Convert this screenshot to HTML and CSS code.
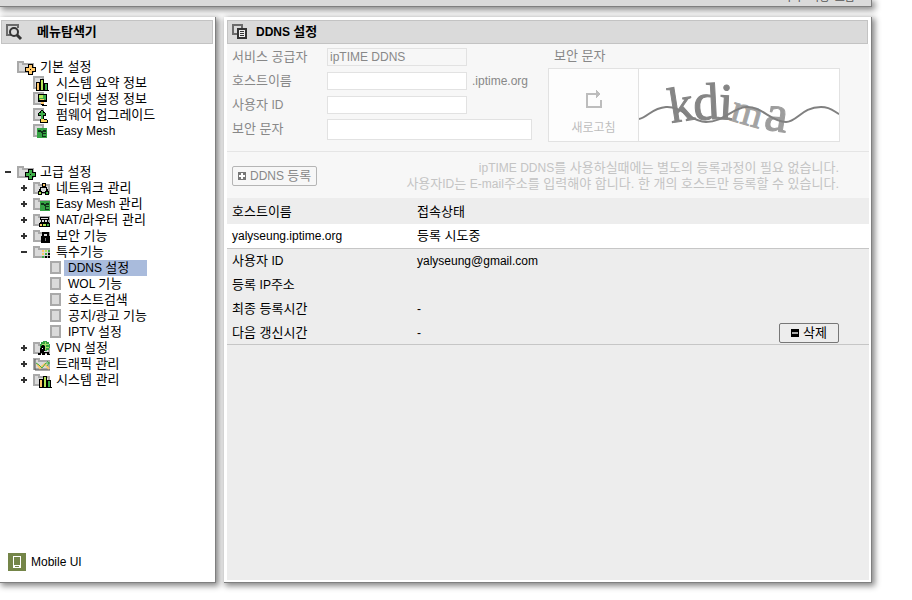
FILE: index.html
```html
<!DOCTYPE html>
<html lang="ko">
<head>
<meta charset="utf-8">
<title>DDNS 설정</title>
<link rel="stylesheet" href="styles.css">
</head>
<body>
<svg class="defs" width="0" height="0" aria-hidden="true">
  <symbol id="folder" viewBox="0 0 20 16"><path d="M1 3h5v2h10v8H1z" fill="#dadada" stroke="#a9a9a9" stroke-width="2"/></symbol>
  <symbol id="file" viewBox="0 0 20 16"><path d="M1 2h9v11H1z" fill="#dadada" stroke="#a9a9a9" stroke-width="2"/></symbol>
  <symbol id="cross" viewBox="0 0 20 16"><path d="M11 5h5v3h3v5h-3v3h-5v-3H8V8h3z" fill="#000"/><path d="M12 6h3v3h3v3h-3v3h-3v-3H9V9h3z" fill="currentColor"/><path d="M13 10h1v1h-1z" fill="#000"/></symbol>
  <symbol id="bars" viewBox="0 0 20 16"><path d="M3 7h4V4h4v4h4v7h1v1H3z" fill="#000"/><path d="M4 8h2v7H4z" fill="#ffc86b"/><path d="M8 5h2v10H8z" fill="#b5e655"/><path d="M12 9h2v6h-2z" fill="#3fae49"/></symbol>
  <symbol id="monitor" viewBox="0 0 20 16"><path d="M5 3h9v8H5z" fill="#000"/><path d="M6 4h7v5H6z" fill="#3fae49"/><path d="M6 4h4v3H6z" fill="#b5e655"/><path d="M7 8h4v1H7zM8 11h3v2H8z" fill="#ffc86b"/><path d="M8 13h3v1h3v1H9z" fill="#000"/></symbol>
  <symbol id="upgrade" viewBox="0 0 20 16"><path d="M8 3h2v1h1v1h1v1h1v3h-2v3h3v1h1v3H7v-4h1V9H5V6h1V5h1V4h1z" fill="#000"/><path d="M8 4h2v2h2v2h-2v4H8V8H6V6h2z" fill="#3fae49"/><path d="M8 12h3v1h3v2H8z" fill="#ffd65c"/></symbol>
  <symbol id="mesh" viewBox="0 0 20 16"><path d="M4 5h10v10H4z" fill="#35a344"/><path d="M5 7h3v1h2V7h3v2h-3v1h3v1h-3v2h3v1H9v-4H8v-1H5z" fill="#10341a"/></symbol>
  <symbol id="net" viewBox="0 0 20 16"><path d="M9 3h4v4h1v2h1v2h1v4h-4v-2H9v2H5v-4h1V9h1V7h2zM8 8v3h1v1h3v-1h1V8z" fill="#000" fill-rule="evenodd"/><path d="M10 4h2v2h-2z" fill="#ffc86b"/><path d="M6 12h2v2H6z" fill="#b5e655"/><path d="M13 12h2v2h-2z" fill="#3fae49"/></symbol>
  <symbol id="nat" viewBox="0 0 20 16"><path d="M7 5h9v3H7zM8 8h1v2H8zM11 8h1v2h-1zM14 8h1v2h-1zM7 10h9v1H7zM6 11h11v4H6z" fill="#000"/><path d="M8 6h7v1H8z" fill="#dadada"/><path d="M7 12h2v2H7z" fill="#ffc86b"/><path d="M10 12h3v2h-3z" fill="#b5e655"/><path d="M14 12h2v2h-2z" fill="#3fae49"/></symbol>
  <symbol id="lock" viewBox="0 0 20 16"><path d="M10 9V5h5v4" fill="none" stroke="#000" stroke-width="2"/><path d="M8 8h9v7H8z" fill="#000"/><path d="M12 10h1v3h-1z" fill="#777"/></symbol>
  <symbol id="dots" viewBox="0 0 20 16"><path d="M9 6h2v2H9zM9 9h2v2H9z" fill="#ffc86b"/><path d="M12 6h2v2h-2z" fill="#b5e655"/><path d="M15 6h2v2h-2zM9 12h2v2H9zM12 9h2v2h-2z" fill="#3fae49"/><path d="M15 9h2v2h-2zM12 12h2v2h-2zM15 12h2v2h-2z" fill="#000"/></symbol>
  <symbol id="vpn" viewBox="0 0 20 16"><circle cx="12" cy="6" r="5" fill="#35a344"/><path d="M9 4h7M9 7h7M12 2v8" stroke="#a5e06b"/><path d="M8 6h1V5h2v1h1v5h-1v1h5v2h1v1h-3v-2h-2v2H9v-2H8v2H5v-2h2v-2H7V8h1z" fill="#000"/><path d="M9 8h1v1H9z" fill="#fff"/></symbol>
  <symbol id="chart" viewBox="0 0 20 16"><path d="M2 3v11h15" fill="none" stroke="#555"/><path d="M4 8l3 4 5-4 4 5" fill="none" stroke="#ffc86b" stroke-width="2"/><path d="M3 7l3 2 3 3 4-5h4M14 5l2 2-2 3" fill="none" stroke="#3fae49" stroke-width="1"/></symbol>
</svg>

<header class="topbar"><span>누구</span><span>사용</span><span>도움</span></header>

<div class="layout">
  <nav class="panel sidebar" aria-label="메뉴탐색기">
    <h2 class="title">
      <svg width="18" height="18" viewBox="0 0 18 18" aria-hidden="true"><path d="M6 12H2V2h11v3" fill="none" stroke="#6b6b6b" stroke-width="2"/><circle cx="9" cy="9" r="4" fill="#dadada" stroke="#333" stroke-width="2"/><path d="M12 12l4 4" stroke="#333" stroke-width="3"/></svg>
      <span>메뉴탐색기</span>
    </h2>
    <ul class="tree">
      <li>
        <a href="#" class="node"><i class="toggle"></i><svg class="ico c-orange"><use href="#folder"/><use href="#cross"/></svg><span>기본 설정</span></a>
        <ul>
          <li><a href="#" class="node"><i class="toggle"></i><svg class="ico"><use href="#file"/><use href="#bars"/></svg><span>시스템 요약 정보</span></a></li>
          <li><a href="#" class="node"><i class="toggle"></i><svg class="ico"><use href="#file"/><use href="#monitor"/></svg><span>인터넷 설정 정보</span></a></li>
          <li><a href="#" class="node"><i class="toggle"></i><svg class="ico"><use href="#file"/><use href="#upgrade"/></svg><span>펌웨어 업그레이드</span></a></li>
          <li><a href="#" class="node"><i class="toggle"></i><svg class="ico"><use href="#file"/><use href="#mesh"/></svg><span class="en">Easy Mesh</span></a></li>
        </ul>
      </li>
      <li>
        <a href="#" class="node"><i class="toggle minus"></i><svg class="ico c-green"><use href="#folder"/><use href="#cross"/></svg><span>고급 설정</span></a>
        <ul>
          <li><a href="#" class="node"><i class="toggle plus"></i><svg class="ico"><use href="#folder"/><use href="#net"/></svg><span>네트워크 관리</span></a></li>
          <li><a href="#" class="node"><i class="toggle plus"></i><svg class="ico"><use href="#folder"/><use href="#mesh" x="3"/></svg><span><span class="en">Easy Mesh </span>관리</span></a></li>
          <li><a href="#" class="node"><i class="toggle plus"></i><svg class="ico"><use href="#folder"/><use href="#nat"/></svg><span><span class="en">NAT/</span>라우터 관리</span></a></li>
          <li><a href="#" class="node"><i class="toggle plus"></i><svg class="ico"><use href="#folder"/><use href="#lock"/></svg><span>보안 기능</span></a></li>
          <li>
            <a href="#" class="node"><i class="toggle minus"></i><svg class="ico"><use href="#folder"/><use href="#dots"/></svg><span>특수기능</span></a>
            <ul class="leaves">
              <li><a href="#" class="node"><svg class="ico"><use href="#file"/></svg><span class="selected"><span class="en">DDNS </span>설정</span></a></li>
              <li><a href="#" class="node"><svg class="ico"><use href="#file"/></svg><span><span class="en">WOL </span>기능</span></a></li>
              <li><a href="#" class="node"><svg class="ico"><use href="#file"/></svg><span>호스트검색</span></a></li>
              <li><a href="#" class="node"><svg class="ico"><use href="#file"/></svg><span>공지/광고 기능</span></a></li>
              <li><a href="#" class="node"><svg class="ico"><use href="#file"/></svg><span><span class="en">IPTV </span>설정</span></a></li>
            </ul>
          </li>
          <li><a href="#" class="node"><i class="toggle plus"></i><svg class="ico"><use href="#folder"/><use href="#vpn"/></svg><span><span class="en">VPN </span>설정</span></a></li>
          <li><a href="#" class="node"><i class="toggle plus"></i><svg class="ico smooth"><use href="#folder"/><use href="#chart"/></svg><span>트래픽 관리</span></a></li>
          <li><a href="#" class="node"><i class="toggle plus"></i><svg class="ico"><use href="#folder"/><use href="#bars" x="3"/></svg><span>시스템 관리</span></a></li>
        </ul>
      </li>
    </ul>
    <a href="#" class="mobile en">
      <svg width="18" height="18" viewBox="0 0 18 18" aria-hidden="true"><path d="M0 0h18v18H0z" fill="#748548"/><path d="M5 3h8v12H5z" fill="#fff"/><path d="M6 4h6v8H6zM7 13h4v1H7z" fill="#748548"/></svg>
      <span>Mobile UI</span>
    </a>
  </nav>

  <main class="panel content">
    <h1 class="title">
      <svg width="18" height="18" viewBox="0 0 18 18" shape-rendering="crispEdges" aria-hidden="true"><path d="M5 11H1V2h9v3" fill="none" stroke="#6b6b6b" stroke-width="2"/><path d="M6 6h8v9H6z" fill="#eee" stroke="#333" stroke-width="2"/><path d="M8 8h4v1H8zM8 10h4v1H8zM8 12h4v1H8z" fill="#333"/></svg>
      <span><span class="en">DDNS </span>설정</span>
    </h1>
    <div class="body">
      <form class="form">
        <div class="fields">
          <label for="provider">서비스 공급자</label><div><input id="provider" class="en" value="ipTIME DDNS" readonly></div>
          <label for="host">호스트이름</label><div><input id="host" class="en"><span class="en">.iptime.org</span></div>
          <label for="user">사용자 <span class="en">ID</span></label><div><input id="user" class="en"></div>
          <label for="code">보안 문자</label><div><input id="code" class="en wide"></div>
        </div>
        <div class="security">
          <div class="caption">보안 문자</div>
          <div class="captcha">
            <button type="button" class="refresh">
              <svg width="18" height="20" viewBox="0 0 18 20" shape-rendering="crispEdges" aria-hidden="true"><path d="M10 5H2v13h14v-7M10 5h3" fill="none" stroke="#bdbdbd" stroke-width="2"/><path d="M11 1l5 4-5 4z" fill="#bdbdbd"/></svg>
              <span>새로고침</span>
            </button>
            <svg class="code" viewBox="0 0 200 72" width="200" height="72">
              <g class="glyphs">
                <text transform="translate(32 54) rotate(-9)" font-size="50">k</text>
                <text transform="translate(55 51) rotate(-3)" font-size="52">d</text>
                <text transform="translate(79 50) rotate(3)" font-size="52">i</text>
                <text transform="translate(90 51) rotate(16)" font-size="40" opacity=".75">m</text>
                <text transform="translate(124 60) rotate(9)" font-size="52" opacity=".8">a</text>
              </g>
              <path d="M0 50C9 48 13 39 27 38C43 37 52 53 67 53C85 53 93 39 107 38C123 37 132 53 147 53C158 53 163 38 182 38C193 38 195 43 200 45" fill="none" stroke="#808080" stroke-width="2"/>
            </svg>
          </div>
        </div>
      </form>
      <div class="actions">
        <button type="button" class="btn faded"><i class="sign plus"></i><span><span class="en">DDNS </span>등록</span></button>
        <p><span class="en">ipTIME DDNS</span>를 사용하실때에는 별도의 등록과정이 필요 없습니다.<br>사용자<span class="en">ID</span>는 <span class="en">E-mail</span>주소를 입력해야 합니다. 한 개의 호스트만 등록할 수 있습니다.</p>
      </div>
      <table class="hosts">
        <thead><tr><th>호스트이름</th><th colspan="2">접속상태</th></tr></thead>
        <tbody>
          <tr class="current"><td class="en">yalyseung.iptime.org</td><td colspan="2">등록 시도중</td></tr>
          <tr><td>사용자 <span class="en">ID</span></td><td class="en" colspan="2">yalyseung@gmail.com</td></tr>
          <tr><td>등록 <span class="en">IP</span>주소</td><td colspan="2"></td></tr>
          <tr><td>최종 등록시간</td><td class="en" colspan="2">-</td></tr>
          <tr class="last"><td>다음 갱신시간</td><td class="en">-</td><td class="act"><button type="button" class="btn delete"><i class="sign"></i><span>삭제</span></button></td></tr>
        </tbody>
      </table>
    </div>
  </main>
</div>
</body>
</html>
```
FILE: styles.css
```css
* { box-sizing: border-box; }

body {
  margin: 0;
  min-height: 100vh;
  display: flex;
  flex-direction: column;
  background: #fff;
  color: #000;
  font: 13px/16px "Liberation Sans", "Noto Sans CJK KR", sans-serif;
}

button, input { font: inherit; color: inherit; }
.en { font-size: 12px; }
a { color: inherit; text-decoration: none; }
ul { list-style: none; margin: 0; padding: 0; }
.defs { position: absolute; }

.topbar {
  height: 7px;
  margin-right: 40px;
  padding-right: 16px;
  display: flex;
  justify-content: flex-end;
  align-items: flex-end;
  gap: 5px;
  background: #dadada;
  border-bottom: 1px solid #7f7f7f;
  border-right: 1px solid #7f7f7f;
  box-shadow: 2px 2px 6px 1px #888;
  color: #555;
  font-size: 11px;
  line-height: 16px;
}
.topbar span { padding-bottom: 1px; }

.layout {
  flex: 1;
  display: flex;
  gap: 8px;
  padding: 10px 40px 17px 0;
}

.panel {
  display: flex;
  flex-direction: column;
  background: #fff;
  border: solid #7f7f7f;
  border-width: 0 1px 1px 0;
  box-shadow: 2px 2px 6px 1px #888;
}
.sidebar { flex: 0 0 216px; padding: 3px 2px 0 1px; }
.content { flex: 1; min-width: 0; padding: 3px 2px 2px 3px; }

.title {
  height: 24px;
  margin: 0;
  padding: 0 4px;
  display: flex;
  align-items: center;
  flex: none;
  gap: 6px;
  background: #dadada;
  border: 1px solid #c3c3c3;
  font-size: 13px;
  font-weight: bold;
}
.sidebar .title { gap: 14px; padding: 0 3px; }
.content .title { margin-right: 1px; }

.tree { flex: 1; padding: 15px 0 0 4px; }
.tree > li + li { margin-top: 25px; }
.tree ul { padding-left: 16px; }
.tree ul.leaves { padding-left: 29px; }
.node { display: flex; height: 16px; white-space: nowrap; }
.toggle { width: 6px; height: 16px; margin-right: 6px; flex: none; display: flex; align-items: center; }
.toggle.minus::before { content: ""; width: 6px; height: 2px; background: #333; }
.toggle.plus::before {
  content: "";
  width: 6px;
  height: 6px;
  background: linear-gradient(#333, #333) center / 6px 2px no-repeat, linear-gradient(#333, #333) center / 2px 6px no-repeat;
}
.ico { width: 20px; height: 16px; margin-right: 3px; flex: none; shape-rendering: crispEdges; }
.ico.smooth { shape-rendering: auto; }
.ico { overflow: visible; }
.leaves .ico { margin-right: -6px; }
.leaves .node > span { padding: 0 4px; }
.c-orange { color: #ffc86b; }
.c-green { color: #3fae49; }
.selected { width: 83px; background: #a9bbdc; }
.mobile { display: flex; align-items: center; gap: 5px; padding: 0 7px 11px; }

.body { flex: 1; background: #ededed; }

.form {
  display: flex;
  gap: 16px;
  height: 108px;
  padding: 1px 0 0 5px;
  background: #f7f7f7;
  border-bottom: 1px solid #e5e5e5;
  color: #888;
}
.fields {
  display: grid;
  grid-template-columns: 95px 205px;
  grid-auto-rows: 24px;
  align-items: center;
}
.fields div { display: flex; align-items: center; gap: 5px; }
input {
  width: 140px;
  height: 18px;
  padding: 0 2px;
  background: #fff;
  border: 1px solid #e2e2e2;
  outline: 0;
}
input[readonly] { background: #f7f7f7; }
input.wide { width: 205px; height: 21px; }

.caption { padding: 3px 6px 4px; }
.captcha { display: flex; width: 292px; height: 74px; background: #fff; border: 1px solid #e2e2e2; }
.refresh {
  width: 90px;
  padding: 20px 0 0;
  display: flex;
  flex-direction: column;
  align-items: center;
  justify-content: flex-start;
  gap: 11px;
  border: 0;
  border-right: 1px solid #e2e2e2;
  background: #fdfdfd;
  color: #bdbdbd;
  font-size: 12px;
}
.glyphs { fill: #858585; stroke: #858585; font-family: "Liberation Serif", serif; }

.actions {
  display: flex;
  align-items: center;
  justify-content: space-between;
  height: 46px;
  padding: 2px 30px 0 5px;
  background: #f7f7f7;
}
.actions p { margin: 0; text-align: right; color: #c4c4c4; }

.btn {
  display: inline-flex;
  align-items: center;
  justify-content: center;
  gap: 4px;
  height: 20px;
  padding: 0 5px;
  border: 1px solid #777;
  border-radius: 2px;
  background: #ededed;
  line-height: 16px;
}
.btn.faded { border-color: #b5b5b5; background: #f7f7f7; color: #888; }
.btn.delete { width: 60px; }
.sign { width: 8px; height: 8px; background: linear-gradient(#aaa, #aaa) center / 6px 2px no-repeat #000; }
.sign.plus { background: linear-gradient(#fff, #fff) center / 6px 2px no-repeat, linear-gradient(#fff, #fff) center / 2px 6px no-repeat #777; }

.hosts { width: 100%; border-collapse: separate; border-spacing: 0; table-layout: fixed; }
.hosts th, .hosts td { height: 24px; padding: 0 5px; text-align: left; font-weight: normal; white-space: nowrap; }
.hosts th { height: 26px; padding-top: 2px; }
.hosts th:first-child { width: 185px; }
.hosts .current td { height: 25px; background: #fff; border-bottom: 1px solid #c6c6c6; }
.hosts .last td { border-bottom: 1px solid #c6c6c6; }
.hosts .last .act { padding-right: 30px; text-align: right; }
.act .btn { vertical-align: middle; }
```
